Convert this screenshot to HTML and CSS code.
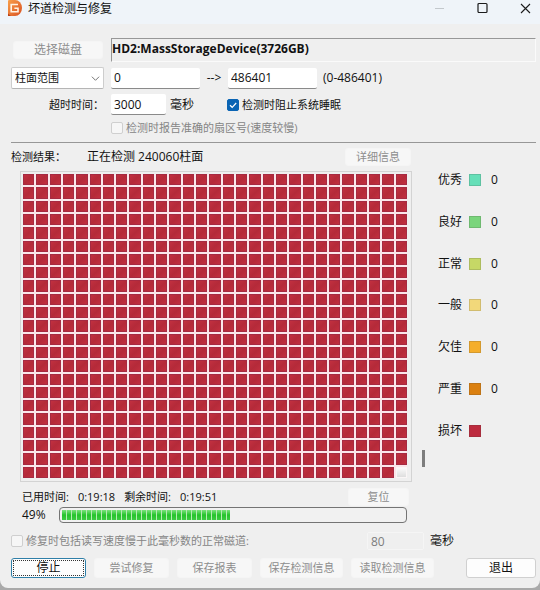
FILE: index.html
```
<!DOCTYPE html>
<html lang="zh-CN">
<head>
<meta charset="utf-8">
<title>坏道检测与修复</title>
<link rel="stylesheet" href="styles.css">
</head>
<body>
<div class="window">
  <header class="titlebar">
    <svg class="logo" viewBox="0 0 14 16" aria-hidden="true">
      <defs><linearGradient id="lg" x1="0" y1="0" x2="1" y2="1"><stop offset="0" stop-color="#f9a04c"/><stop offset="1" stop-color="#d9501f"/></linearGradient></defs>
      <path d="M1 0H7A7 8 0 0 1 7 16H1Q0 16 0 15V1Q0 0 1 0Z" fill="url(#lg)"/>
      <path d="M10 4.5H3.2V11.8H10V8.2H6.4" fill="none" stroke="#fff3e4" stroke-width="1.6"/>
      <path d="M0 13.5L3 16H0Z" fill="#b9431a"/>
    </svg>
    <h1 class="title">坏道检测与修复</h1>
    <div class="winbtns">
      <button class="winbtn" aria-label="最小化" disabled><svg viewBox="0 0 12 12"><path d="M1 6.5H10" stroke="#c3c8cc"/></svg></button>
      <button class="winbtn" aria-label="最大化"><svg viewBox="0 0 12 12"><rect x="1" y="1.5" width="9" height="9" rx="1" fill="none" stroke="#1b1b1b" stroke-width="1.2"/></svg></button>
      <button class="winbtn" aria-label="关闭"><svg viewBox="0 0 12 12"><path d="M1 2L10 11M10 2L1 11" stroke="#1b1b1b" stroke-width="1.1"/></svg></button>
    </div>
  </header>

  <main class="content">
    <section class="settings">
      <button class="btn btn-disk" disabled>选择磁盘</button>
      <div class="disk">HD2:MassStorageDevice(3726GB)</div>

      <select class="range" aria-label="范围类型"><option>柱面范围</option></select>
      <div class="line">
        <input class="field wide" type="text" value="0" aria-label="起始柱面">
        <span class="arrow">--&gt;</span>
        <input class="field wide" type="text" value="486401" aria-label="结束柱面">
        <span class="hint">(0-486401)</span>
      </div>

      <label class="timeout-label" for="timeout">超时时间：</label>
      <div class="line">
        <input class="field short" id="timeout" type="text" value="3000">
        <span class="unit">毫秒</span>
        <label class="check sleep"><input type="checkbox" checked>检测时阻止系统睡眠</label>
      </div>

      <label class="check muted accurate"><input type="checkbox" disabled>检测时报告准确的扇区号(速度较慢)</label>
    </section>

    <section class="result-head">
      <span class="result-label">检测结果：</span>
      <span class="result-text">正在检测 240060柱面</span>
      <button class="btn btn-detail" disabled>详细信息</button>
    </section>

    <section class="result">
      <div class="panel"><div class="blocks" id="blocks"></div></div>
      <div class="track"><div class="thumb"></div></div>
      <ul class="legend">
        <li><span>优秀</span><i class="swatch great"></i><span>0</span></li>
        <li><span>良好</span><i class="swatch good"></i><span>0</span></li>
        <li><span>正常</span><i class="swatch normal"></i><span>0</span></li>
        <li><span>一般</span><i class="swatch fair"></i><span>0</span></li>
        <li><span>欠佳</span><i class="swatch poor"></i><span>0</span></li>
        <li><span>严重</span><i class="swatch severe"></i><span>0</span></li>
        <li><span>损坏</span><i class="swatch bad"></i></li>
      </ul>
    </section>

    <section class="progress">
      <div class="times">
        <span>已用时间:</span><span>0:19:18</span><span>剩余时间:</span><span>0:19:51</span>
        <button class="btn btn-reset" disabled>复位</button>
      </div>
      <div class="meter">
        <span class="percent">49%</span>
        <div class="bar" role="progressbar" aria-label="检测进度" aria-valuenow="49" aria-valuemin="0" aria-valuemax="100"><div class="fill" style="width:49%"></div></div>
      </div>
    </section>

    <section class="repair">
      <label class="check muted"><input type="checkbox" disabled>修复时包括读写速度慢于此毫秒数的正常磁道:</label>
      <input class="field threshold" type="text" value="80" aria-label="毫秒阈值" disabled>
      <span class="unit">毫秒</span>
    </section>

    <footer class="actions">
      <button class="btn primary">停止</button>
      <button class="btn" disabled>尝试修复</button>
      <button class="btn" disabled>保存报表</button>
      <button class="btn long" disabled>保存检测信息</button>
      <button class="btn long" disabled>读取检测信息</button>
      <button class="btn exit">退出</button>
    </footer>
  </main>
</div>
<script src="blocks.js"></script>
</body>
</html>
```
FILE: styles.css
```
* { box-sizing: border-box; }
body {
  margin: 0;
  background: #a9a9a9;
  color: #111;
  font: 12px/16px "Open Sans", "Noto Sans CJK SC", sans-serif;
}
button, input, select { font: inherit; color: inherit; margin: 0; }

.window {
  background: #efefef;
  border-radius: 0 0 8px 8px;
  overflow: hidden;
}

/* title bar */
.titlebar {
  display: flex;
  align-items: flex-start;
  height: 24px;
  padding: 0 8px;
  background: #eff4f9;
}
.logo { width: 14px; height: 16px; }
.title {
  margin: 0 0 0 6px;
  font-size: 12px;
  line-height: 18px;
  font-weight: 400;
}
.winbtns { display: flex; gap: 31px; margin-left: auto; }
.winbtn {
  display: block;
  width: 12px;
  height: 16px;
  padding: 2px 0;
  border: 0;
  background: none;
}
.winbtn svg { display: block; width: 12px; height: 12px; }

.content { padding: 14px 4px 10px 11px; }

/* shared controls */
.btn {
  height: 18px;
  padding: 0;
  border: 1px solid #d0d0d0;
  border-radius: 3px;
  background: #fdfdfd;
  line-height: 16px;
  text-align: center;
}
.btn:disabled { border-color: #f5f5f5; background: #f7f7f7; color: #8d8d8d; }
.field {
  height: 21px;
  padding: 0 3px;
  border: 0;
  border-bottom: 1px solid #8a8a8a;
  border-radius: 2px;
  background: #fff;
}
.field:disabled { border: 1px solid #f5f5f5; background: #efefef; color: #7d7d7d; }
.wide { width: 89px; }
.short { width: 55px; }
.check { display: flex; align-items: center; gap: 3px; font-size: 11px; }
.check input {
  appearance: none;
  width: 12px;
  height: 12px;
  border: 1px solid #cfcfcf;
  border-radius: 2px;
  background: #f6f6f6;
}
.check input:checked {
  border-color: #0a64b4;
  background: #0a64b4 url("data:image/svg+xml,%3Csvg xmlns='http://www.w3.org/2000/svg' viewBox='0 0 10 10'%3E%3Cpath d='M2 5.2L4.2 7.3L8.2 3' fill='none' stroke='white' stroke-width='1.2'/%3E%3C/svg%3E");
}
.muted { color: #858585; }

/* scan settings */
.settings {
  display: grid;
  grid-template-columns: 93px 1fr;
  column-gap: 7px;
  row-gap: 5px;
  align-items: center;
  padding-bottom: 6px;
  border-bottom: 1px solid #979797;
}
.btn-disk { margin: 0 1px 0 2px; }
.disk {
  height: 24px;
  padding: 2px 0;
  border: 1px solid #fafafa;
  border-top-color: #979797;
  border-left-color: #979797;
  font-weight: 700;
}
.range {
  appearance: none;
  height: 22px;
  padding: 0 3px;
  border: 1px solid #cdcdcd;
  border-bottom-color: #b5b5b5;
  border-radius: 2px;
  background: #fff url("data:image/svg+xml,%3Csvg xmlns='http://www.w3.org/2000/svg' viewBox='0 0 10 10'%3E%3Cpath d='M1 3L5 7L9 3' fill='none' stroke='%23666'/%3E%3C/svg%3E") no-repeat right 3px center / 9px 9px;
  font-size: 11px;
}
.line { display: flex; align-items: center; }
.arrow { width: 28px; text-align: center; }
.hint { margin-left: 6px; }
.timeout-label { text-align: right; font-size: 11px; }
.unit { margin-left: 4px; }
.sleep { margin-left: 33px; }
.accurate { grid-column: 2; }

/* result header */
.result-head { display: flex; align-items: center; height: 28px; }
.result-label { width: 76px; font-size: 11px; }
.result-text { width: 258px; }
.btn-detail { width: 66px; font-size: 11px; }

/* block map */
.result { display: flex; padding-left: 9px; }
.panel {
  flex: 1;
  padding: 2px 4px 3px 2px;
  border: 1px solid #d3d3d3;
}
.blocks {
  display: grid;
  grid-template-columns: repeat(29, 1fr);
  grid-template-rows: repeat(23, 1fr);
  gap: 2px;
  height: 304px;
  background: #fbe6ea;
}
.block {
  border: 1px solid #a62a42;
  background: linear-gradient(135deg, #c23040, #b42a39 50%, #c22f3f);
}
.block.pending { border-color: #faf6f6; background: linear-gradient(#fafafa, #dedede); }
.track { width: 13px; display: flex; align-items: flex-end; justify-content: flex-end; padding-bottom: 15px; }
.thumb { width: 3px; height: 17px; background: #7d7d7d; }
.legend {
  display: flex;
  flex-direction: column;
  justify-content: space-between;
  width: 98px;
  height: 267px;
  margin: 1px 0 0 13px;
  padding: 0;
  list-style: none;
}
.legend li { display: flex; align-items: center; height: 16px; }
.swatch { width: 12px; height: 12px; margin: 0 10px 0 7px; border: 1px solid rgba(60, 60, 60, 0.18); }
.great { background: #66dfb8; }
.good { background: #7ad57c; }
.normal { background: #c6d866; }
.fair { background: #f2d87a; }
.poor { background: #f5ae2c; }
.severe { background: #db8010; }
.bad { background: #bd2b3e; }

/* progress */
.progress { padding-left: 11px; }
.times { display: flex; align-items: center; gap: 9px; width: 387px; height: 18px; margin-top: 6px; font-size: 11px; }
.btn-reset { width: 61px; margin-left: auto; }
.meter { display: flex; align-items: center; height: 18px; }
.percent { width: 37px; }
.bar {
  width: 348px;
  height: 16px;
  padding: 2px;
  border: 1px solid #747474;
  border-radius: 4px;
  background: #f1f1f1;
}
.fill {
  height: 100%;
  background:
    repeating-linear-gradient(90deg, transparent 0 4px, #b5eab5 4px 5px),
    linear-gradient(#7be27d, #24c32c 50%, #3ccc43);
}

/* repair */
.repair { display: flex; align-items: center; height: 20px; margin-top: 7px; }
.repair .check { width: 356px; }
.repair .unit { margin-left: 6px; }
.threshold { width: 57px; height: 18px; }

/* actions */
.actions { display: flex; gap: 8px; margin-top: 7px; }
.actions .btn { width: 75px; height: 20px; font-size: 11px; }
.actions .long { width: 83px; }
.actions .exit { width: 70px; margin-left: auto; }
.actions .primary, .actions .exit { font-size: 12px; }
.primary {
  border-color: #2f7fa8;
  outline: 1px dotted #333;
  outline-offset: -3px;
}
```
FILE: blocks.js
```
const map = document.getElementById("blocks");
const total = 29 * 23;
for (let i = 0; i < total; i++) {
  const block = document.createElement("div");
  block.className = i === total - 1 ? "block pending" : "block";
  map.appendChild(block);
}
```
